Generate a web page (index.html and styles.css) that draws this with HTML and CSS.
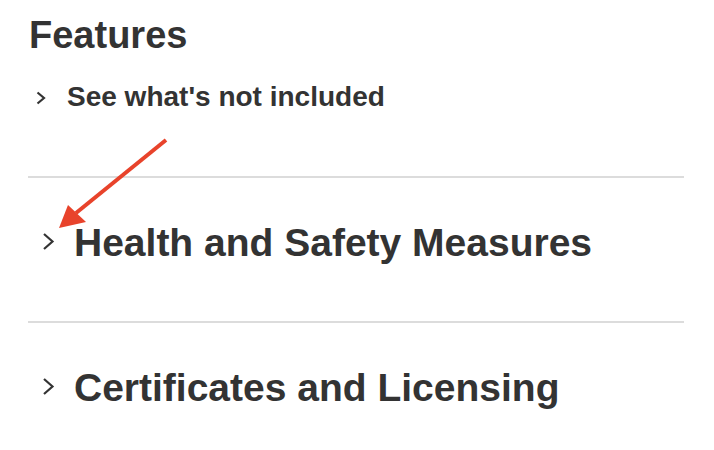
FILE: index.html
```html
<!DOCTYPE html>
<html lang="en">
<head>
<meta charset="utf-8">
<title>Features</title>
<link rel="stylesheet" href="styles.css">
</head>
<body>
<div class="page">
  <section class="features">
    <h2 class="features-title">Features</h2>
    <button class="toggle toggle-small" type="button">
      <svg class="chev chev-small" viewBox="0 0 10 14" width="10" height="14" aria-hidden="true"><polyline points="1.5,1.5 8,7 1.5,12.5" /></svg>
      <span>See what's not included</span>
    </button>
  </section>
  <section class="panel">
    <button class="toggle toggle-large" type="button">
      <svg class="chev chev-large" viewBox="0 0 13 19" width="13" height="19" aria-hidden="true"><polyline points="2,2 10.5,9.5 2,17" /></svg>
      <span>Health and Safety Measures</span>
    </button>
  </section>
  <section class="panel">
    <button class="toggle toggle-large" type="button">
      <svg class="chev chev-large" viewBox="0 0 13 19" width="13" height="19" aria-hidden="true"><polyline points="2,2 10.5,9.5 2,17" /></svg>
      <span>Certificates and Licensing</span>
    </button>
  </section>
  <svg class="annotation" viewBox="0 0 714 450" width="714" height="450" aria-hidden="true">
    <line x1="166" y1="140" x2="76" y2="213" />
    <polygon points="59,228 68,205 86,222" />
  </svg>
</div>
</body>
</html>
```

FILE: styles.css
```css
html, body {
  margin: 0;
  padding: 0;
  background: #ffffff;
}

body {
  font-family: "Liberation Sans", Arial, Helvetica, sans-serif;
  color: #333333;
}

.page {
  position: relative;
  width: 714px;
  height: 450px;
  box-sizing: border-box;
  padding: 0 30px 0 28px;
  overflow: hidden;
}

.features {
  padding-top: 14px;
  padding-bottom: 63px;
}

.features-title {
  margin: 0;
  font-size: 38px;
  font-weight: 700;
  line-height: 42px;
  color: #333333;
  padding-left: 1px;
}

.toggle {
  display: flex;
  align-items: center;
  border: 0;
  background: none;
  padding: 0;
  margin: 0;
  font-family: inherit;
  color: #333333;
  font-weight: 700;
  cursor: pointer;
  text-align: left;
}

.toggle-small {
  margin-top: 25px;
  font-size: 28px;
  line-height: 32px;
  gap: 21px;
  padding-left: 8px;
}

.toggle-large {
  font-size: 39px;
  line-height: 45px;
  gap: 19px;
  padding-left: 14px;
}

.chev polyline {
  fill: none;
  stroke: #333333;
  stroke-width: 2.2;
  stroke-linecap: butt;
  stroke-linejoin: miter;
}

.chev-small {
  margin-top: 1px;
}

.chev-large {
  margin-top: -2px;
}

.panel {
  border-top: 2px solid #dcdcdc;
  padding: 42px 0 56px;
}

.annotation {
  position: absolute;
  left: 0;
  top: 0;
  pointer-events: none;
}

.annotation line {
  stroke: #e8432b;
  stroke-width: 4;
}

.annotation polygon {
  fill: #e8432b;
}
```
